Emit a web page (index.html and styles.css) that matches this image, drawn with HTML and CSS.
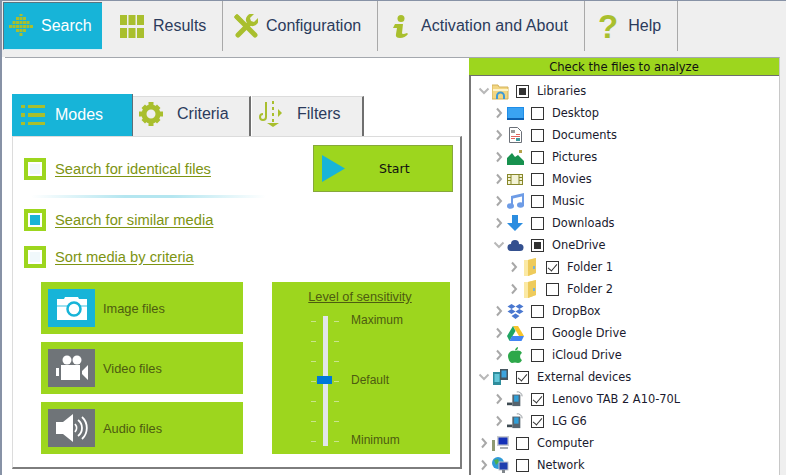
FILE: index.html
```html
<!DOCTYPE html>
<html lang="en">
<head>
  <meta charset="UTF-8" />
  <title>Duplicate Finder</title>
  <link rel="stylesheet" href="styles.css">
</head>
<body>

<svg class="defs" width="0" height="0">
  <symbol id="yellow-folder" viewBox="0 0 14 20">
    <path d="M1 3h4l8 -2v15l-8 3H1z" fill="#f5e08a"/>
    <path d="M5 3l8-2v15l-8 3z" fill="#eecb5c"/>
    <path d="M1 3h4v16H1z" fill="#fbe9a4"/>
    <rect x="10" y="9" width="2" height="3" fill="#7fb3cf"/>
  </symbol>
  <symbol id="phone" viewBox="0 0 20 18">
    <path d="M12 1a5 5 0 0 1 6 5" fill="none" stroke="#8a8f94" stroke-width="1"/>
    <rect x="7" y="4" width="9" height="13" fill="#56646e"/>
    <rect x="9" y="5" width="5" height="7" fill="#2f9fd8"/>
    <rect x="1" y="13" width="6" height="3" fill="#3d4a52"/>
  </symbol>
  <symbol id="arrow-right" viewBox="0 0 8 12">
    <path d="M2 1.500 6 6l-4 4.500" fill="none" stroke="#a8a8a8" stroke-width="2"/>
  </symbol>
  <symbol id="arrow-down" viewBox="0 0 12 8">
    <path d="M1.500 1.500 6 6l4.500-4.500" fill="none" stroke="#b8b8b8" stroke-width="2"/>
  </symbol>
</svg>

<div class="window">

  <!-- main toolbar -->
  <nav class="toolbar">
    <a class="tool tool-active tool-search">
      <svg width="24" height="24" viewBox="0 0 24 24" fill="#a9bf2e"><path d="M10.500 0h3v3h-3zM10.500 4h3v3h-3zM7 4h3v3H7zM14 4h3v3h-3zM3.500 8h3v3h-3zM7 8h3v3H7zM10.500 8h3v3h-3zM14 8h3v3h-3zM17.500 8h3v3h-3zM0 12h3v3H0zM3.500 12h3v3h-3zM7 12h3v3H7zM10.500 12h3v3h-3zM14 12h3v3h-3zM17.500 12h3v3h-3zM21 12h3v3h-3zM7 16h3v3H7zM10.500 16h3v3h-3zM14 16h3v3h-3zM10.500 20h3v3h-3z" transform="translate(0 -1)"/></svg>
      <span>Search</span>
    </a>
    <a class="tool tool-results">
      <svg width="24" height="23" viewBox="0 0 24 23" fill="#a9bf2e"><path d="M0 0h7v10H0zM8.500 0h7v10h-7zM17 0h7v10h-7zM0 13h7v10H0zM8.500 13h7v10h-7zM17 13h7v10h-7z"/></svg>
      <span>Results</span>
    </a>
    <a class="tool tool-config">
      <svg width="24" height="24" viewBox="0 0 24 24"><path d="M3 3 21 21" stroke="#a9bf2e" stroke-width="5" stroke-linecap="round"/><path d="M4 21 15 10" stroke="#a9bf2e" stroke-width="5" stroke-linecap="round"/><path d="M13 9a6 6 0 0 1 7-9l-4 4 1 3 3 1 4-4a6 6 0 0 1-9 7z" fill="#a9bf2e"/><path d="M0 3 3 0l6 6-3 3z" fill="#a9bf2e"/></svg>
      <span>Configuration</span>
    </a>
    <a class="tool tool-about">
      <svg width="16" height="23" viewBox="0 0 16 23" fill="#a9bf2e"><circle cx="9" cy="3.500" r="3.500"/><path d="M3 9h8l-1 9q0 2 5 0l1 1q-3 4-8 4-5 0-4-4l1-6-4 0z"/></svg>
      <span>Activation and About</span>
    </a>
    <a class="tool tool-help">
      <b class="help-mark">?</b>
      <span>Help</span>
    </a>
  </nav>

  <div class="content">

    <!-- left side -->
    <section class="left">
      <div class="left-inner">
        <div class="subtabs">
          <a class="subtab subtab-modes">
            <svg width="24" height="20" viewBox="0 0 24 20" fill="#a9bf2e"><path d="M0 0h4v3H0zM7 0h17v3H7zM0 8h4v4H0zM7 8h17v4H7zM0 17h4v3H0zM7 17h17v3H7z"/></svg>
            <span>Modes</span>
          </a>
          <a class="subtab subtab-criteria">
            <svg width="24" height="24" viewBox="0 0 24 24"><circle cx="12" cy="12" r="7" fill="none" stroke="#a9bf2e" stroke-width="5"/><path d="M9.500 0h5v4h-5zM9.500 20h5v4h-5zM0 9.500h4v5H0zM20 9.500h4v5h-4zM2.500 6 6 2.500 9 5.500 5.500 9zM18 2.500 21.500 6 18.500 9 15 5.500zM2.500 18 5.500 15 9 18.500 6 21.500zM15 18.500 18.500 15 21.500 18 18 21.500z" fill="#a9bf2e"/></svg>
            <span>Criteria</span>
          </a>
          <a class="subtab subtab-filters">
            <svg width="24" height="26" viewBox="0 0 24 26" fill="none" stroke="#a9bf2e" stroke-width="2"><path d="M4 13a3 3 0 1 0 3 3V1"/><path d="M14 0v3M14 6v3M14 12v3M14 18v3"/><path d="M19 8l4 4-4 4" fill="#a9bf2e" stroke="none"/><path d="M8 22h12l-6 4z" fill="#a9bf2e" stroke="none"/></svg>
            <span>Filters</span>
          </a>
        </div>

        <div class="panel">
          <div class="modes-top">
            <div class="modes">
              <label class="mode mode-first"><i class="radio"></i><a>Search for identical files</a></label>
              <div class="divider"></div>
              <label class="mode mode-second"><i class="radio radio-on"></i><a>Search for similar media</a></label>
              <label class="mode mode-third"><i class="radio"></i><a>Sort media by criteria</a></label>
            </div>
            <button class="start">
              <svg width="23" height="27" viewBox="0 0 23 27"><path d="M0 0 23 13.500 0 27z" fill="#17b4d8"/></svg>
              <span>Start</span>
            </button>
          </div>

          <div class="media">
            <div class="media-files">
              <div class="file-tile">
                <div class="file-icon file-icon-on">
                  <svg width="32" height="24" viewBox="0 0 32 24"><path d="M1 3h7l1-2h13l1 2h8v21H1z" fill="#fff"/><rect x="1" y="9" width="30" height="2" fill="#9be0f0"/><circle cx="18" cy="13" r="6.500" fill="#fff" stroke="#17b4d8" stroke-width="2.500"/></svg>
                </div>
                <span>Image files</span>
              </div>
              <div class="file-tile">
                <div class="file-icon">
                  <svg width="32" height="27" viewBox="0 0 32 27" fill="#fff"><circle cx="11" cy="5" r="4.500"/><circle cx="21" cy="5" r="4.500"/><rect x="5" y="10" width="19" height="15"/><path d="M0 13h3v8H0zM26 16l6-6v15l-6-6z"/></svg>
                </div>
                <span>Video files</span>
              </div>
              <div class="file-tile">
                <div class="file-icon">
                  <svg width="32" height="28" viewBox="0 0 32 28"><path d="M0 8h7l10-8v28L7 20H0z" fill="#fff"/><path d="M19 10a6 6 0 0 1 0 8M22 6a10 10 0 0 1 0 16M26 3a15 15 0 0 1 0 22" fill="none" stroke="#fff" stroke-width="1.800"/></svg>
                </div>
                <span>Audio files</span>
              </div>
            </div>

            <div class="sensitivity">
              <h4>Level of sensitivity</h4>
              <div class="slider">
                <div class="slider-scale">
                  <div class="tick"></div><div class="tick"></div><div class="tick"></div><div class="tick"></div><div class="tick"></div><div class="tick"></div><div class="tick"></div>
                  <div class="slider-track"></div>
                  <div class="slider-thumb"></div>
                </div>
                <div class="slider-labels">
                  <span>Maximum</span>
                  <span>Default</span>
                  <span>Minimum</span>
                </div>
              </div>
            </div>
          </div>
        </div>
      </div>
    </section>

    <!-- right side, file tree -->
    <aside class="right">
      <div class="tree-title">Check the files to analyze</div>
      <ul class="tree">
        <li class="row">
          <svg class="chev" width="12" height="8"><use href="#arrow-down"/></svg>
          <span class="ico"><svg width="17" height="17" viewBox="0 0 17 17"><path d="M0 2h6l1 2h9v12H0z" fill="#f2d682" stroke="#d3b25a"/><path d="M4 13a4 4 0 0 1 9 0v3h-2v-3a2 2 0 0 0-5 0v3H4z" fill="#3f9ad6"/><rect x="1" y="6" width="15" height="2" fill="#fff3c8"/></svg></span>
          <i class="cb cb-mixed"></i><span class="name">Libraries</span>
        </li>
        <li class="row lvl1">
          <svg class="chev" width="12" height="12"><use href="#arrow-right"/></svg>
          <span class="ico"><svg width="17" height="13" viewBox="0 0 17 13"><rect width="17" height="13" fill="#1e8de8"/><rect x="1" y="1" width="15" height="10" fill="#3aa3f2"/><rect x="0" y="11" width="17" height="2" fill="#0d5fb0"/></svg></span>
          <i class="cb"></i><span class="name">Desktop</span>
        </li>
        <li class="row lvl1">
          <svg class="chev" width="12" height="12"><use href="#arrow-right"/></svg>
          <span class="ico"><svg width="13" height="16" viewBox="0 0 13 16"><path d="M.5.500h8l4 4v11H.5z" fill="#fff" stroke="#6b7078"/><rect x="2" y="3" width="4" height="3" fill="#9a9a9a"/><path d="M7 7h4v1H7zM2 9h9v1H2zM2 11h4v1H2z" fill="#e0655f"/><rect x="7" y="11" width="4" height="3" fill="#3f9a9d"/></svg></span>
          <i class="cb"></i><span class="name">Documents</span>
        </li>
        <li class="row lvl1">
          <svg class="chev" width="12" height="12"><use href="#arrow-right"/></svg>
          <span class="ico"><svg width="17" height="15" viewBox="0 0 17 15"><path d="M0 15V8l5-5 3 4 3-2 6 6v4z" fill="#17914e"/><rect x="12" y="0" width="3" height="3" fill="#b5a24a"/></svg></span>
          <i class="cb"></i><span class="name">Pictures</span>
        </li>
        <li class="row lvl1">
          <svg class="chev" width="12" height="12"><use href="#arrow-right"/></svg>
          <span class="ico"><svg width="16" height="11" viewBox="0 0 16 11" fill="none" stroke="#87872a"><rect x=".5" y=".5" width="15" height="10" fill="#f3f3d6"/><path d="M4 .5v10M12 .5v10M.5 3.500H4M.5 6.500H4M12 3.500h3.500M12 6.500h3.500"/></svg></span>
          <i class="cb"></i><span class="name">Movies</span>
        </li>
        <li class="row lvl1">
          <svg class="chev" width="12" height="12"><use href="#arrow-right"/></svg>
          <span class="ico"><svg width="17" height="16" viewBox="0 0 17 16" fill="#6e9ce6"><path d="M4 3l13-3v3L6 5.500V13H4zM15 3h2v10h-2z"/><ellipse cx="3.500" cy="13" rx="3.500" ry="2.800"/><ellipse cx="13.500" cy="12" rx="3.500" ry="2.800"/></svg></span>
          <i class="cb"></i><span class="name">Music</span>
        </li>
        <li class="row lvl1">
          <svg class="chev" width="12" height="12"><use href="#arrow-right"/></svg>
          <span class="ico"><svg width="16" height="16" viewBox="0 0 16 16"><path d="M5 0h6v8h5l-8 8-8-8h5z" fill="#2b8de0"/></svg></span>
          <i class="cb"></i><span class="name">Downloads</span>
        </li>
        <li class="row lvl1">
          <svg class="chev" width="12" height="8"><use href="#arrow-down"/></svg>
          <span class="ico"><svg width="17" height="11" viewBox="0 0 17 11" fill="#34508f"><circle cx="4" cy="7.500" r="3.500"/><circle cx="8" cy="4" r="4"/><circle cx="13" cy="7.500" r="3.500"/><rect x="4" y="7" width="9" height="4"/></svg></span>
          <i class="cb cb-mixed"></i><span class="name">OneDrive</span>
        </li>
        <li class="row lvl2">
          <svg class="chev" width="12" height="12"><use href="#arrow-right"/></svg>
          <span class="ico"><svg width="14" height="20"><use href="#yellow-folder"/></svg></span>
          <i class="cb cb-checked"></i><span class="name">Folder 1</span>
        </li>
        <li class="row lvl2">
          <svg class="chev" width="12" height="12"><use href="#arrow-right"/></svg>
          <span class="ico"><svg width="14" height="20"><use href="#yellow-folder"/></svg></span>
          <i class="cb"></i><span class="name">Folder 2</span>
        </li>
        <li class="row lvl1">
          <svg class="chev" width="12" height="12"><use href="#arrow-right"/></svg>
          <span class="ico"><svg width="17" height="15" viewBox="0 0 17 15" fill="#4a78d0"><path d="M4.500 0 8.500 2.500 4.500 5 .5 2.500zM12.500 0l4 2.500-4 2.500-4-2.500zM4.500 5l4 2.500-4 2.500-4-2.500zM12.500 5l4 2.500-4 2.500-4-2.500zM8.500 9.500l4 2.500-4 3-4-3z"/></svg></span>
          <i class="cb"></i><span class="name">DropBox</span>
        </li>
        <li class="row lvl1">
          <svg class="chev" width="12" height="12"><use href="#arrow-right"/></svg>
          <span class="ico"><svg width="17" height="15" viewBox="0 0 17 15"><path d="M6 0h5l6 10h-5z" fill="#f7c52c"/><path d="M6 0 0 10l2.500 5L8.500 5z" fill="#1fa463"/><path d="M5 10h12l-2.500 5h-12z" fill="#4285f4"/></svg></span>
          <i class="cb"></i><span class="name">Google Drive</span>
        </li>
        <li class="row lvl1">
          <svg class="chev" width="12" height="12"><use href="#arrow-right"/></svg>
          <span class="ico"><svg width="14" height="16" viewBox="0 0 14 16" fill="#2da84a"><path d="M7 4C9 3 13 3 14 6c-3 2-2 6 0 7-1 2-2 3-4 3-1 0-2-.5-3-.5S5 16 4 16c-2 0-4-4-4-7 0-4 4-6 7-5z"/><path d="M7 3.500C7 2 8 .5 10 0c0 2-1 3.500-3 3.500z"/></svg></span>
          <i class="cb"></i><span class="name">iCloud Drive</span>
        </li>
        <li class="row">
          <svg class="chev" width="12" height="8"><use href="#arrow-down"/></svg>
          <span class="ico"><svg width="15" height="16" viewBox="0 0 15 16"><rect x="0" y="3" width="8" height="13" fill="#2f8d9c"/><rect x="1.500" y="5" width="5" height="8" fill="#63c6d8"/><rect x="7" y="0" width="8" height="11" fill="#46555f"/><rect x="8.500" y="1.500" width="5" height="7" fill="#3da4de"/></svg></span>
          <i class="cb cb-checked"></i><span class="name">External devices</span>
        </li>
        <li class="row lvl1">
          <svg class="chev" width="12" height="12"><use href="#arrow-right"/></svg>
          <span class="ico"><svg width="18" height="16"><use href="#phone"/></svg></span>
          <i class="cb cb-checked"></i><span class="name">Lenovo TAB 2 A10-70L</span>
        </li>
        <li class="row lvl1">
          <svg class="chev" width="12" height="12"><use href="#arrow-right"/></svg>
          <span class="ico"><svg width="18" height="16"><use href="#phone"/></svg></span>
          <i class="cb cb-checked"></i><span class="name">LG G6</span>
        </li>
        <li class="row">
          <svg class="chev" width="12" height="12"><use href="#arrow-right"/></svg>
          <span class="ico"><svg width="17" height="15" viewBox="0 0 17 15"><rect x="5" y="0" width="12" height="10" fill="#c9ccd0"/><rect x="6.500" y="1.500" width="9" height="7" fill="#1531b8"/><rect x="8" y="11" width="8" height="2" fill="#a8acb0"/><rect x="0" y="4" width="3" height="11" fill="#8f9a72"/></svg></span>
          <i class="cb"></i><span class="name">Computer</span>
        </li>
        <li class="row">
          <svg class="chev" width="12" height="12"><use href="#arrow-right"/></svg>
          <span class="ico"><svg width="17" height="17" viewBox="0 0 17 17"><circle cx="6" cy="6" r="6" fill="#2f9ad8"/><path d="M2 3l4-1 1 3-3 3z" fill="#4caf50"/><rect x="7" y="5" width="9" height="8" fill="#1f3fae" stroke="#c2c6ca"/><rect x="10" y="13" width="3" height="3" fill="#80868c"/></svg></span>
          <i class="cb"></i><span class="name">Network</span>
        </li>
      </ul>
    </aside>

  </div>
</div>

</body>
</html>
```

FILE: styles.css
```css
* {
  box-sizing: border-box;
}
body {
  margin: 0;
  font-family: "Liberation Sans", Arial, sans-serif;
  background-color: #efefef;
  color: #2b3b5c;
}
.defs {
  display: block;
  height: 0;
}
.window {
  width: 786px;
  height: 475px;
  overflow: hidden;
  border-top: 1px solid #8792a6;
  border-left: 2px solid #8792a6;
}

/* toolbar */
.toolbar {
  display: flex;
  height: 56px;
  background-color: #efefef;
}
.tool {
  display: flex;
  align-items: center;
  height: 50px;
  font-size: 16px;
  border-right: 1px solid #a9a9a9;
}
.tool svg {
  flex: none;
}
.tool-active {
  height: 48px;
  margin: 1px 0 0 1px;
  background-color: #17b4d8;
  color: #fff;
  border: none;
  border-top: 1px solid #5b7480;
  border-left: 1px solid #5b7480;
  border-bottom: 1px solid #d8eef4;
}
.tool-search {
  width: 99px;
  padding-left: 5px;
  gap: 8px;
}
.tool-results {
  width: 114px;
  margin-left: 7px;
  padding-left: 11px;
  gap: 9px;
}
.tool-config {
  width: 155px;
  padding-left: 11px;
  gap: 8px;
}
.tool-about {
  width: 207px;
  padding-left: 14px;
  gap: 13px;
}
.tool-about span {
  letter-spacing: 0.05px;
}
.tool-help {
  width: 93px;
  padding-left: 13px;
  gap: 10px;
}
.help-mark {
  font-size: 33px;
  line-height: 1;
  color: #a9bf2e;
}

/* content */
.content {
  display: flex;
  height: 418px;
}
.left {
  width: 467px;
  padding-left: 3px;
  background-color: #fff;
}
.left-inner {
  height: 100%;
  padding: 36px 0 0 7px;
  border-top: 1px solid #a4a8ae;
}

/* sub tabs */
.subtabs {
  display: flex;
  align-items: flex-end;
  height: 42px;
}
.subtab {
  display: flex;
  align-items: center;
  height: 40px;
  padding-bottom: 5px;
  font-size: 16px;
  background-color: #efefef;
  border-top: 1px solid #dcdcdc;
  border-right: 2px solid #6f6f6f;
}
.subtab-modes {
  width: 121px;
  height: 42px;
  padding: 0 0 0 9px;
  gap: 10px;
  background-color: #17b4d8;
  color: #fff;
  border-top: none;
  border-right: 1px solid #5d6f78;
}
.subtab-criteria {
  width: 118px;
  padding-left: 6px;
  gap: 14px;
}
.subtab-filters {
  width: 112px;
  margin-left: 1px;
  padding-left: 7px;
  gap: 14px;
}

/* panel */
.panel {
  width: 450px;
  height: 333px;
  padding: 8px 7px 0 11px;
  border-top: 1px solid #dcdcdc;
  border-left: 1px solid #dcdcdc;
  border-right: 2px solid #7d7d7d;
  border-bottom: 2px solid #7d7d7d;
}
.modes-top {
  display: flex;
  justify-content: space-between;
  height: 137px;
}
.modes {
  width: 245px;
}
.mode {
  display: flex;
  align-items: center;
  gap: 9px;
  height: 22px;
  font-size: 14.700px;
  color: #7d9412;
}
.mode a {
  text-decoration: underline;
  text-underline-offset: 2px;
}
.mode-first {
  margin-top: 13px;
}
.mode-second {
  margin-top: 11px;
}
.mode-third {
  margin-top: 15px;
}
.radio {
  flex: none;
  display: block;
  width: 22px;
  height: 22px;
  background-color: #f0f8fb;
  border: 4px solid #9dd61e;
  box-shadow: inset 0 0 0 2px #fff;
}
.radio-on {
  background-color: #17b4d8;
  box-shadow: inset 0 0 0 2px #fff;
  padding: 2px;
  background-clip: content-box;
}
.divider {
  height: 3px;
  margin: 15px 0 0 7px;
  width: 235px;
  background: linear-gradient(to right, #fff, #b4e6f0 40%, #b4e6f0 60%, #fff);
}
.start {
  display: flex;
  align-items: center;
  width: 140px;
  height: 47px;
  padding: 0 0 0 8px;
  font-family: "DejaVu Sans", sans-serif;
  font-size: 12.500px;
  color: #111;
  background-color: #9dd61e;
  border: 1px solid #86a83a;
}
.start span {
  margin-left: 34px;
}

/* media tiles */
.media {
  display: flex;
  margin-left: 17px;
  gap: 29px;
}
.media-files {
  display: flex;
  flex-direction: column;
  gap: 8px;
}
.file-tile {
  display: flex;
  align-items: center;
  width: 202px;
  height: 52px;
  padding-left: 7px;
  gap: 8px;
  font-size: 12.800px;
  color: #4d5c10;
  background-color: #9dd61e;
}
.file-tile span {
  margin-top: 1px;
}
.file-icon {
  flex: none;
  display: flex;
  align-items: center;
  justify-content: center;
  width: 47px;
  height: 38px;
  background-color: #6f7478;
}
.file-icon-on {
  background-color: #17b4d8;
}
.sensitivity {
  width: 178px;
  height: 172px;
  padding-top: 8px;
  color: #4d5c10;
  background-color: #9dd61e;
}
.sensitivity h4 {
  margin: 0 0 0 -2px;
  font-size: 12.750px;
  font-weight: normal;
  line-height: 14px;
  text-align: center;
  text-decoration: underline;
}
.slider {
  display: flex;
  height: 130px;
  margin: 12px 0 0 39px;
}
.slider-scale {
  position: relative;
  display: flex;
  flex-direction: column;
  justify-content: space-between;
  width: 28px;
  height: 130px;
}
.tick {
  height: 10px;
  background: linear-gradient(#c8e58a, #c8e58a) left center / 5px 1px no-repeat,
    linear-gradient(#c8e58a, #c8e58a) right center / 5px 1px no-repeat;
}
.slider-track {
  position: absolute;
  left: 12px;
  top: 0;
  width: 5px;
  height: 130px;
  background-color: #e2e6ea;
}
.slider-thumb {
  position: absolute;
  left: 6px;
  top: 60px;
  width: 15px;
  height: 8px;
  background-color: #0078d7;
}
.slider-labels {
  display: flex;
  flex-direction: column;
  justify-content: space-between;
  height: 130px;
  margin: -1px 0 0 12px;
  font-size: 12px;
  line-height: 10px;
}

/* tree */
.right {
  width: 311px;
  height: 418px;
  background-color: #fff;
  border-top: 1px solid #a4a8ae;
  border-right: 1px solid #c8c8c8;
}
.tree-title {
  height: 18px;
  font-family: "DejaVu Sans", sans-serif;
  font-size: 11.600px;
  line-height: 18px;
  text-align: center;
  color: #111;
  background-color: #9dd61e;
  border-bottom: 1px solid #6d6d6d;
}
.tree {
  height: 400px;
  margin: 0;
  padding: 4px 0 0 7px;
  list-style: none;
  border-left: 2px solid #777;
}
.row {
  display: flex;
  align-items: center;
  height: 22px;
  font-family: "DejaVu Sans", sans-serif;
  font-size: 11.400px;
  color: #1a1a2e;
}
.lvl1 {
  padding-left: 15px;
}
.lvl2 {
  padding-left: 30px;
}
.chev {
  flex: none;
  width: 12px;
}
.ico {
  flex: none;
  display: flex;
  justify-content: center;
  width: 20px;
}
.cb {
  flex: none;
  display: flex;
  align-items: center;
  justify-content: center;
  width: 13px;
  height: 13px;
  margin-left: 6px;
  background-color: #fff;
  border: 1px solid #333;
}
.cb-mixed::before {
  content: "";
  width: 7px;
  height: 7px;
  background-color: #333;
}
.cb-checked::before {
  content: "";
  width: 4px;
  height: 8px;
  margin-top: -2px;
  border-right: 1px solid #333;
  border-bottom: 1px solid #333;
  transform: rotate(40deg);
}
.name {
  margin-left: 8px;
  white-space: nowrap;
}
```
